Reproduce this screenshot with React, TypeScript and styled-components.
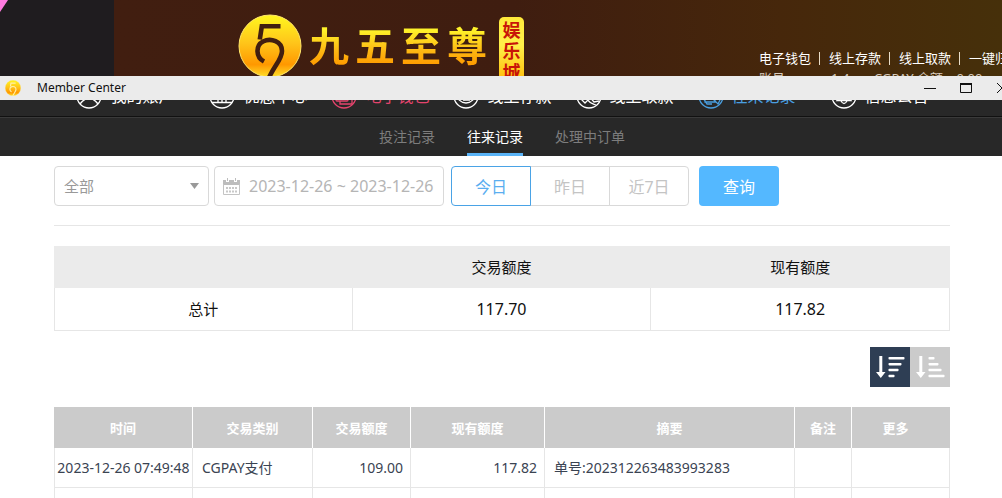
import React from "react";
import styled, { createGlobalStyle, css } from "styled-components";

const sans = `"Noto Sans", "Noto Sans CJK SC", sans-serif`;

const GlobalStyle = createGlobalStyle`
  *, *::before, *::after { box-sizing: border-box; }
  body { margin: 0; background: #fff; font-family: ${sans}; overflow-x: hidden; }
  button, input, select { font-family: inherit; margin: 0; }
  a { color: inherit; text-decoration: none; }
  svg { display: block; flex: none; }
`;

/* ---------- site banner ---------- */

const Banner = styled.header`
  display: flex;
  height: 76px;
  overflow: hidden;
  background: #1f1c1f;
`;

const BannerEdge = styled.div`
  flex: 0 0 114px;
`;

const BannerBody = styled.div`
  flex: 1;
  min-width: 0;
  display: flex;
  justify-content: space-between;
  padding-left: 124px;
  background: linear-gradient(to right, #411e10 0%, #3f1d10 45%, #46270b 75%, #46300a 100%);
`;

const Brand = styled.a`
  display: flex;
  align-items: flex-start;
  padding-top: 14px;
`;

const BrandName = styled.span`
  display: flex;
  gap: 6px;
  margin: 9px 12px 0 7px;
  font-size: 40px;
  line-height: 46px;
  font-weight: 700;
`;

const BrandGlyph = styled.span`
  background: linear-gradient(to bottom, #fff32a 15%, #fdb813 60%, #ff9c00 90%);
  background-clip: text;
  -webkit-background-clip: text;
  color: transparent;
`;

const BrandTag = styled.span`
  display: flex;
  flex-direction: column;
  align-items: center;
  width: 25px;
  margin-top: 3px;
  padding: 3px 0;
  border-radius: 5px;
  background: linear-gradient(to bottom, #ffe93a, #fff04a 40%, #ffb400);
  color: #c81408;
  font-size: 18px;
  line-height: 21px;
  font-weight: 700;
`;

const Account = styled.div`
  flex: 0 0 243px;
  overflow: hidden;
  padding-top: 48px;
  color: #fff;
  font-size: 13px;
  line-height: 20px;
  white-space: nowrap;
`;

const QuickLinks = styled.nav`
  display: flex;
  a + a::before {
    content: "";
    display: inline-block;
    width: 1px;
    height: 13px;
    margin: 0 9px 0 8px;
    vertical-align: -2px;
    background: #e8dcc8;
  }
`;

const AccountLine = styled.div`
  display: flex;
  color: #d8ccbf;
`;

const AccountLabel = styled.span`
  width: 72px;
`;

const AccountUser = styled.span`
  width: 43px;
`;

/* ---------- window bar ---------- */

const TitleBar = styled.div`
  display: flex;
  align-items: center;
  height: 24px;
  padding-left: 5px;
  overflow: hidden;
  background: #ebebeb;
`;

const WindowTitle = styled.h1`
  flex: 1;
  margin: 0 0 0 16px;
  color: #111;
  font-size: 12px;
  line-height: 24px;
  font-weight: 400;
`;

const WindowControls = styled.div`
  display: flex;
  margin-right: -18px;
`;

const WindowButton = styled.button`
  display: grid;
  place-items: center;
  width: 36px;
  height: 24px;
  padding: 0;
  border: 0;
  background: none;
`;

/* ---------- navigation ---------- */

const MainNav = styled.nav`
  height: 17px;
  overflow: hidden;
  display: flex;
  justify-content: center;
  align-items: flex-end;
  gap: 24px;
  padding: 0 0 7px 3px;
  background: #282828;
  border-bottom: 1px solid #111;
`;

const MainLink = styled.a<{ $color: string; $side?: "left" | "right" }>`
  display: flex;
  align-items: center;
  gap: 8px;
  flex: none;
  height: 26px;
  color: ${(p) => p.$color};
  font-size: 16px;
  line-height: 26px;
  white-space: nowrap;
  ${(p) => p.$side === "left" && css`margin-right: 11px;`}
  ${(p) => p.$side === "right" && css`margin-left: 11px;`}
`;

const SubNav = styled.nav`
  display: flex;
  justify-content: center;
  gap: 32px;
  height: 39px;
  padding-left: 2px;
  background: #282828;
  border-top: 1px solid #3a3a3a;
`;

const SubLink = styled.a<{ $active?: boolean }>`
  color: ${(p) => (p.$active ? "#fff" : "#7d7d7d")};
  border-bottom: 3px solid ${(p) => (p.$active ? "#5ab4f8" : "transparent")};
  font-size: 14px;
  line-height: 38px;
  height: 38px;
`;

/* ---------- page content ---------- */

const Content = styled.main`
  padding: 10px 52px 0 54px;
`;

const Filters = styled.form`
  display: flex;
  padding-bottom: 19px;
  border-bottom: 1px solid #e6e6e6;
`;

const field = css`
  height: 40px;
  border: 1px solid #d9d9d9;
  border-radius: 4px;
  background: #fff;
`;

const TypePicker = styled.div`
  display: grid;
  align-items: center;
  width: 155px;
  margin-right: 5px;
  > * { grid-area: 1 / 1; }
  > svg { justify-self: end; margin-right: 10px; pointer-events: none; }
`;

const TypeSelect = styled.select`
  ${field}
  width: 100%;
  padding: 0 9px;
  appearance: none;
  color: #999;
  font-size: 15px;
`;

const DateField = styled.label`
  ${field}
  display: flex;
  align-items: center;
  gap: 9px;
  width: 230px;
  margin-right: 7px;
  padding-left: 8px;
`;

const DateInput = styled.input`
  flex: 1;
  min-width: 0;
  padding: 0;
  border: 0;
  outline: 0;
  color: #b5b5b5;
  font-size: 16px;
`;

const RangeGroup = styled.div`
  display: flex;
  margin-right: 10px;
`;

const RangeButton = styled.button<{ $active?: boolean }>`
  width: 80px;
  height: 40px;
  padding: 0;
  border: 1px solid ${(p) => (p.$active ? "#4aa3e6" : "#d9d9d9")};
  background: #fff;
  color: ${(p) => (p.$active ? "#5aaef0" : "#c4c4c4")};
  font-size: 16px;
  position: relative;
  z-index: ${(p) => (p.$active ? 1 : 0)};
  & + & { margin-left: -1px; }
  &:first-child { border-radius: 4px 0 0 4px; }
  &:last-child { border-radius: 0 4px 4px 0; }
`;

const QueryButton = styled.button`
  width: 80px;
  height: 40px;
  padding: 0;
  border: 0;
  border-radius: 4px;
  background: #54b8ff;
  color: #fff;
  font-size: 16px;
`;

const SummaryTable = styled.table`
  width: 100%;
  margin-top: 20px;
  table-layout: fixed;
  border-spacing: 0;
  color: #111;
  font-size: 15px;
  line-height: 20px;
  text-align: center;
  th {
    height: 42px;
    padding: 0;
    border-right: 1px solid #ebebeb;
    background: #ebebeb;
    font-weight: 400;
  }
  td {
    height: 43px;
    padding: 0;
    border-right: 1px solid #e6e6e6;
    border-bottom: 1px solid #e6e6e6;
  }
  td:first-child { border-left: 1px solid #e6e6e6; }
`;

const Amount = styled.td`
  font-size: 16px;
`;

const SortBar = styled.div`
  display: flex;
  justify-content: flex-end;
  margin: 16px 0 20px;
`;

const SortButton = styled.button<{ $active?: boolean }>`
  width: 40px;
  height: 40px;
  padding: 0;
  border: 0;
  background: ${(p) => (p.$active ? "#2e3e54" : "#cbcbcb")};
`;

const RecordTable = styled.table`
  width: 100%;
  table-layout: fixed;
  border-spacing: 0;
  color: #3a4352;
  font-size: 14px;
  line-height: 20px;
  white-space: nowrap;
`;

const HeadCell = styled.th<{ $last?: boolean }>`
  height: 41px;
  padding: 0 ${(p) => (p.$last ? 10 : 0)}px 0 0;
  border-right: 1px solid ${(p) => (p.$last ? "#cbcbcb" : "#fff")};
  background: #cbcbcb;
  color: #fff;
  font-size: 13px;
  font-weight: 700;
`;

const Cell = styled.td<{ $align?: "left" | "right" | "center" }>`
  height: 40px;
  padding: 0 ${(p) => (p.$align === "right" ? 7 : 0)}px 0 ${(p) => (p.$align === "left" ? 9 : 0)}px;
  border-right: 1px solid #e6e6e6;
  border-bottom: 1px solid #e6e6e6;
  text-align: ${(p) => p.$align ?? "left"};
  &:first-child { border-left: 1px solid #e6e6e6; }
`;

const Col = styled.col<{ $width?: number }>`
  width: ${(p) => (p.$width ? `${p.$width}px` : "auto")};
`;

/* ---------- drawings ---------- */

function Emblem({ size, id, digit }: { size: number; id: string; digit: string }) {
  return (
    <svg width={size} height={size} viewBox="0 0 64 64" aria-hidden="true">
      <defs>
        <linearGradient id={id} x1="0" y1="0" x2="0" y2="1">
          <stop offset="0" stopColor="#fff71f" />
          <stop offset="0.45" stopColor="#ffc51a" />
          <stop offset="0.8" stopColor="#ff9800" />
          <stop offset="1" stopColor="#ffe02a" />
        </linearGradient>
      </defs>
      <circle cx="32" cy="32" r="31" fill={`url(#${id})`} stroke="#ffe66a" strokeWidth="1" />
      <g fill="none" stroke={digit} strokeWidth="4.600">
        <path d="M42.500 12.300H23.800L21.800 25.500" />
        <path d="M26 47.500C17.500 43 17.500 31.500 25 27.500C33 23.500 44 27.500 44 37C44 45 37.500 50 31 63.500" />
      </g>
    </svg>
  );
}

const navDrawings: Record<string, React.ReactNode> = {
  user: <><circle cx="13" cy="10" r="6" /><path d="M4 21Q7 17 10 16H16Q19 17 22 21" /></>,
  gift: <><path d="M3 19.500H23M5 13H21M9 13V19M13 13V19M17 13V19" /></>,
  wallet: <><rect x="5" y="7" width="12" height="11" rx="1" /><path d="M9 18V21H21V12H17" /></>,
  deposit: <><circle cx="13" cy="11" r="9" /><path d="M9 12L12 17L18 13M10 17H17" /></>,
  withdraw: <><path d="M4 15L9 20L12 17L7 11M12 17C14 21 18 21 20 22M12 12L18 19L23 18" /></>,
  record: <><path d="M7 7H17V19H7ZM5 15L9 21H14M14 15L20 21L22 17" /></>,
  bell: <><path d="M6 17.500H20L18 15V11Q18 6 13 6T8 11V15ZM10 18Q13 23 16 18" /></>,
};

function NavIcon({ name }: { name: string }) {
  return (
    <svg width="26" height="26" viewBox="0 0 26 26" fill="none" stroke="currentColor" strokeWidth="1.300" aria-hidden="true">
      <circle cx="13" cy="13" r="12" />
      {navDrawings[name]}
    </svg>
  );
}

function CalendarIcon() {
  return (
    <svg width="17" height="17" viewBox="0 0 17 17" aria-hidden="true">
      <path d="M0 2H3V4H6V2H11V4H14V2H17V7H0Z" fill="#bdbdbd" />
      <path d="M4 0H5V3H4ZM12 0H13V3H12Z" fill="#bdbdbd" />
      <path d="M0.500 6V16.500H16.500V6" fill="none" stroke="#c4c4c4" />
      <path d="M3 9H5V11H3ZM6 9H8V11H6ZM9 9H11V11H9ZM12 9H14V11H12ZM3 12.500H5V14.500H3ZM6 12.500H8V14.500H6ZM9 12.500H11V14.500H9ZM12 12.500H14V14.500H12Z" fill="#c8c8c8" />
    </svg>
  );
}

function SortIcon({ widths }: { widths: number[] }) {
  return (
    <svg width="40" height="40" viewBox="0 0 40 40" fill="#fff" aria-hidden="true">
      <path d="M9.300 9H12.300V25H15.500L10.800 31L6 25H9.300Z" />
      {widths.map((w, i) => (
        <rect key={i} x="18.500" y={10 + i * 5.9} width={w} height="2.500" rx="0.800" />
      ))}
    </svg>
  );
}

/* ---------- data ---------- */

const mainLinks = [
  { text: "我的账户", icon: "user", color: "#fff", side: "left" as const },
  { text: "优惠中心", icon: "gift", color: "#fff" },
  { text: "电子钱包", icon: "wallet", color: "#e5446d" },
  { text: "线上存款", icon: "deposit", color: "#fff" },
  { text: "线上取款", icon: "withdraw", color: "#fff" },
  { text: "往来记录", icon: "record", color: "#4a9fe0" },
  { text: "信息公告", icon: "bell", color: "#fff", side: "right" as const },
];

const quickLinks = ["电子钱包", "线上存款", "线上取款", "一键归户"];
const columns = ["时间", "交易类别", "交易额度", "现有额度", "摘要", "备注", "更多"];

export default function App() {
  return (
    <>
      <GlobalStyle />
      <Banner>
        <BannerEdge>
          <svg width="8" height="12" viewBox="0 0 8 12" aria-hidden="true">
            <path d="M0 0H8L0 12Z" fill="#ff7ae0" />
          </svg>
        </BannerEdge>
        <BannerBody>
          <Brand href="#home">
            <Emblem size={64} id="emblem-large" digit="#411e10" />
            <BrandName>
              {["九", "五", "至", "尊"].map((g) => (
                <BrandGlyph key={g}>{g}</BrandGlyph>
              ))}
            </BrandName>
            <BrandTag>
              <span>娱</span>
              <span>乐</span>
              <span>城</span>
            </BrandTag>
          </Brand>
          <Account>
            <QuickLinks>
              {quickLinks.map((t) => (
                <a href="#quick" key={t}>{t}</a>
              ))}
            </QuickLinks>
            <AccountLine>
              <AccountLabel>账号:</AccountLabel>
              <AccountUser>1.4</AccountUser>
              <span>CGPAY 余额:&nbsp;&nbsp; 0.00</span>
            </AccountLine>
          </Account>
        </BannerBody>
      </Banner>

      <TitleBar>
        <Emblem size={16} id="emblem-small" digit="#fff0a8" />
        <WindowTitle>Member Center</WindowTitle>
        <WindowControls>
          <WindowButton type="button" aria-label="Minimize">
            <svg width="12" height="12"><path d="M0 6.500H12" stroke="#111" /></svg>
          </WindowButton>
          <WindowButton type="button" aria-label="Maximize">
            <svg width="12" height="10"><path d="M0.500 1H11.500V9.500H0.500Z" fill="none" stroke="#111" /><path d="M0 1H12" stroke="#111" strokeWidth="2" /></svg>
          </WindowButton>
          <WindowButton type="button" aria-label="Close">
            <svg width="10" height="10"><path d="M0 0L10 10M10 0L0 10" stroke="#111" /></svg>
          </WindowButton>
        </WindowControls>
      </TitleBar>

      <MainNav>
        {mainLinks.map((l) => (
          <MainLink href="#section" key={l.text} $color={l.color} $side={l.side}>
            <NavIcon name={l.icon} />
            {l.text}
          </MainLink>
        ))}
      </MainNav>
      <SubNav>
        <SubLink href="#bets">投注记录</SubLink>
        <SubLink href="#transfers" $active>往来记录</SubLink>
        <SubLink href="#pending">处理中订单</SubLink>
      </SubNav>

      <Content>
        <Filters>
          <TypePicker>
            <TypeSelect aria-label="交易类别" defaultValue="all">
              <option value="all">全部</option>
            </TypeSelect>
            <svg width="9" height="6" aria-hidden="true"><path d="M0 0H9L4.500 6Z" fill="#999" /></svg>
          </TypePicker>
          <DateField>
            <CalendarIcon />
            <DateInput type="text" aria-label="时间" defaultValue="2023-12-26 ~ 2023-12-26" />
          </DateField>
          <RangeGroup>
            <RangeButton type="button" $active>今日</RangeButton>
            <RangeButton type="button">昨日</RangeButton>
            <RangeButton type="button">近7日</RangeButton>
          </RangeGroup>
          <QueryButton type="button">查询</QueryButton>
        </Filters>

        <SummaryTable>
          <thead>
            <tr>
              <th />
              <th>交易额度</th>
              <th>现有额度</th>
            </tr>
          </thead>
          <tbody>
            <tr>
              <td>总计</td>
              <Amount>117.70</Amount>
              <Amount>117.82</Amount>
            </tr>
          </tbody>
        </SummaryTable>

        <SortBar>
          <SortButton type="button" aria-label="降序" $active>
            <SortIcon widths={[16, 13, 10, 6]} />
          </SortButton>
          <SortButton type="button" aria-label="升序">
            <SortIcon widths={[6, 10, 13, 16]} />
          </SortButton>
        </SortBar>

        <RecordTable>
          <colgroup>
            <Col $width={139} />
            <Col $width={120} />
            <Col $width={98} />
            <Col $width={134} />
            <Col />
            <Col $width={57} />
            <Col $width={98} />
          </colgroup>
          <thead>
            <tr>
              {columns.map((c, i) => (
                <HeadCell key={c} $last={i === columns.length - 1}>{c}</HeadCell>
              ))}
            </tr>
          </thead>
          <tbody>
            <tr>
              <Cell $align="center">2023-12-26 07:49:48</Cell>
              <Cell $align="left">CGPAY支付</Cell>
              <Cell $align="right">109.00</Cell>
              <Cell $align="right">117.82</Cell>
              <Cell $align="left">单号:202312263483993283</Cell>
              <Cell />
              <Cell />
            </tr>
            <tr>
              {columns.map((c) => (
                <Cell key={c} />
              ))}
            </tr>
          </tbody>
        </RecordTable>
      </Content>
    </>
  );
}
